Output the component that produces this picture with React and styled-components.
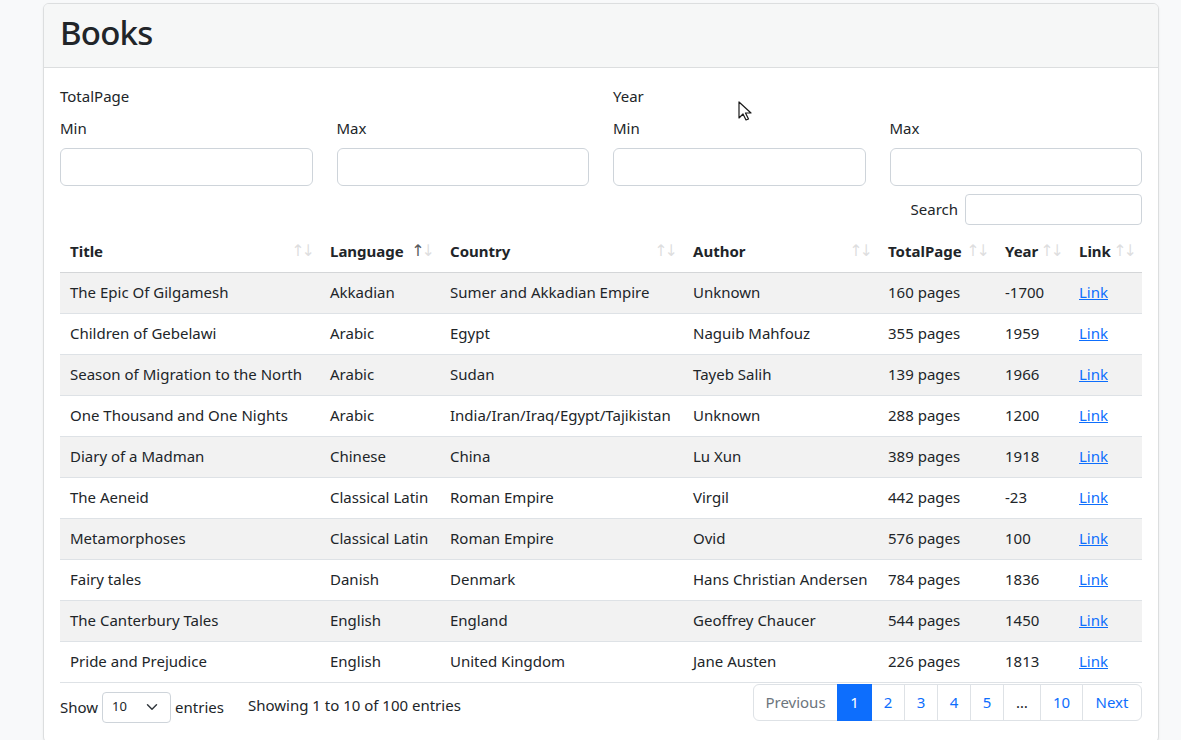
import React from 'react';
import styled, { createGlobalStyle } from 'styled-components';

const GlobalStyle = createGlobalStyle`
  html, body {
    margin: 0;
    padding: 0;
    background: #f8f9fa;
    color: #212529;
    font-family: "Noto Sans", "Open Sans", sans-serif;
    font-size: 15px;
    line-height: 1.5;
  }
  * { box-sizing: border-box; }
`;

const Page = styled.div`
  padding: 3px 22px 0 43px;
  position: relative;
`;

const Card = styled.div`
  border: 1px solid #dcdedf;
  border-radius: 6px;
  background: #fff;
  box-shadow: 0 1px 3px rgba(0, 0, 0, 0.05);
  overflow: hidden;
  min-height: 740px;
`;

const CardHeader = styled.div`
  background: #f6f7f7;
  border-bottom: 1px solid #dcdedf;
  padding: 3px 16px 0;
  height: 64px;
`;

const Title = styled.h1`
  margin: 0;
  font-size: 33px;
  font-weight: 500;
  letter-spacing: -0.8px;
  line-height: 52px;
  color: #212529;
`;

const CardBody = styled.div`
  padding: 17px 16px 16px;
`;

const FilterRow = styled.div`
  display: grid;
  grid-template-columns: repeat(2, 1fr);
  column-gap: 24px;
`;

const FilterGroup = styled.div`
  display: flex;
  flex-direction: column;
`;

const GroupLabel = styled.div`
  height: 32px;
  line-height: 22px;
`;

const MinMax = styled.div`
  display: grid;
  grid-template-columns: 1fr 1fr;
  column-gap: 24px;
`;

const Field = styled.label`
  display: flex;
  flex-direction: column;
  gap: 9px;
`;

const FieldLabel = styled.span`
  line-height: 22px;
`;

const Input = styled.input`
  height: 38px;
  width: 100%;
  border: 1px solid #ced4da;
  border-radius: 6px;
  font: inherit;
  padding: 6px 12px;
  background: #fff;
`;

const SearchRow = styled.div`
  display: flex;
  justify-content: flex-end;
  align-items: center;
  gap: 7px;
  margin-top: 8px;
`;

const SmallInput = styled.input`
  width: 177px;
  height: 31px;
  border: 1px solid #ced4da;
  border-radius: 4px;
  font: inherit;
`;

const Table = styled.table`
  width: 100%;
  border-collapse: collapse;
  table-layout: fixed;
  margin-top: 6px;
`;

const Th = styled.th`
  position: relative;
  text-align: left;
  font-weight: 700;
  padding: 8px 26px 8px 10px;
  height: 41px;
  border-bottom: 1px solid #d4d6d8;
  white-space: nowrap;
`;

const SortIcons = styled.span`
  position: absolute;
  right: 8px;
  top: 50%;
  transform: translateY(-50%);
  font-weight: 400;
  font-size: 16px;
  letter-spacing: -3px;
  color: #212529;
  font-family: "DejaVu Sans", sans-serif;
`;

const Arrow = styled.span`
  opacity: ${(p) => (p.$active ? 0.75 : 0.15)};
`;

const Tr = styled.tr`
  background: ${(p) => (p.$striped ? '#f2f2f2' : '#fff')};
`;

const Td = styled.td`
  padding: 8px 10px;
  height: 41px;
  border-bottom: 1px solid #dee2e6;
  white-space: nowrap;
`;

const A = styled.a`
  color: #0d6efd;
  text-decoration: underline;
`;

const Footer = styled.div`
  display: flex;
  align-items: flex-start;
  margin-top: 1px;
`;

const Length = styled.div`
  display: flex;
  align-items: center;
  gap: 4px;
  margin-top: 8px;
`;

const SelectBox = styled.div`
  width: 69px;
  height: 31px;
  border: 1px solid #ced4da;
  border-radius: 4px;
  display: flex;
  align-items: center;
  justify-content: space-between;
  padding: 0 12px 0 9px;
  font-size: 13px;
`;

const Info = styled.div`
  margin-left: 24px;
  margin-top: 10px;
`;

const Pagination = styled.ul`
  display: flex;
  list-style: none;
  margin: 0 0 0 auto;
  padding: 0;
`;

const PageItem = styled.li`
  height: 37px;
  min-width: ${(p) => p.$w}px;
  display: flex;
  align-items: center;
  justify-content: center;
  border: 1px solid #dee2e6;
  margin-left: -1px;
  color: ${(p) => (p.$active ? '#fff' : p.$muted ? '#6c757d' : p.$plain ? '#212529' : '#0d6efd')};
  background: ${(p) => (p.$active ? '#0d6efd' : '#fff')};
  border-color: ${(p) => (p.$active ? '#0d6efd' : '#dee2e6')};
  position: relative;
  z-index: ${(p) => (p.$active ? 1 : 0)};
  &:first-child {
    border-radius: 6px 0 0 6px;
    margin-left: 0;
  }
  &:last-child {
    border-radius: 0 6px 6px 0;
  }
`;

const Cursor = styled.svg`
  position: absolute;
  left: 738px;
  top: 101px;
`;

const columns = [
  ['Title', 260],
  ['Language', 120],
  ['Country', 243],
  ['Author', 195],
  ['TotalPage', 117],
  ['Year', 74],
  ['Link', 73],
];

const books = [
  ['The Epic Of Gilgamesh', 'Akkadian', 'Sumer and Akkadian Empire', 'Unknown', 160, '-1700'],
  ['Children of Gebelawi', 'Arabic', 'Egypt', 'Naguib Mahfouz', 355, '1959'],
  ['Season of Migration to the North', 'Arabic', 'Sudan', 'Tayeb Salih', 139, '1966'],
  ['One Thousand and One Nights', 'Arabic', 'India/Iran/Iraq/Egypt/Tajikistan', 'Unknown', 288, '1200'],
  ['Diary of a Madman', 'Chinese', 'China', 'Lu Xun', 389, '1918'],
  ['The Aeneid', 'Classical Latin', 'Roman Empire', 'Virgil', 442, '-23'],
  ['Metamorphoses', 'Classical Latin', 'Roman Empire', 'Ovid', 576, '100'],
  ['Fairy tales', 'Danish', 'Denmark', 'Hans Christian Andersen', 784, '1836'],
  ['The Canterbury Tales', 'English', 'England', 'Geoffrey Chaucer', 544, '1450'],
  ['Pride and Prejudice', 'English', 'United Kingdom', 'Jane Austen', 226, '1813'],
];

const pages = [
  { label: 'Previous', w: 85, muted: true },
  { label: '1', w: 35, active: true },
  { label: '2', w: 34 },
  { label: '3', w: 34 },
  { label: '4', w: 34 },
  { label: '5', w: 34 },
  { label: '…', w: 38, plain: true },
  { label: '10', w: 43 },
  { label: 'Next', w: 60 },
];

const RangeFilter = ({ title }) => (
  <FilterGroup>
    <GroupLabel>{title}</GroupLabel>
    <MinMax>
      <Field>
        <FieldLabel>Min</FieldLabel>
        <Input />
      </Field>
      <Field>
        <FieldLabel>Max</FieldLabel>
        <Input />
      </Field>
    </MinMax>
  </FilterGroup>
);

const App = () => (
  <Page>
    <GlobalStyle />
    <Card>
      <CardHeader>
        <Title>Books</Title>
      </CardHeader>
      <CardBody>
        <FilterRow>
          <RangeFilter title="TotalPage" />
          <RangeFilter title="Year" />
        </FilterRow>
        <SearchRow>
          <span>Search</span>
          <SmallInput />
        </SearchRow>
        <Table>
          <colgroup>
            {columns.map(([name, w]) => (
              <col key={name} style={{ width: w }} />
            ))}
          </colgroup>
          <thead>
            <tr>
              {columns.map(([name]) => (
                <Th key={name}>
                  {name}
                  <SortIcons>
                    <Arrow $active={name === 'Language'}>↑</Arrow>
                    <Arrow>↓</Arrow>
                  </SortIcons>
                </Th>
              ))}
            </tr>
          </thead>
          <tbody>
            {books.map((b, i) => (
              <Tr key={b[0]} $striped={i % 2 === 0}>
                <Td>{b[0]}</Td>
                <Td>{b[1]}</Td>
                <Td>{b[2]}</Td>
                <Td>{b[3]}</Td>
                <Td>{b[4]} pages</Td>
                <Td>{b[5]}</Td>
                <Td>
                  <A href="#">Link</A>
                </Td>
              </Tr>
            ))}
          </tbody>
        </Table>
        <Footer>
          <Length>
            <span>Show</span>
            <SelectBox>
              <span>10</span>
              <svg width="12" height="12" viewBox="0 0 16 16" fill="none">
                <path d="M2 5l6 6 6-6" stroke="#343a40" strokeWidth="2" strokeLinecap="round" strokeLinejoin="round" />
              </svg>
            </SelectBox>
            <span>entries</span>
          </Length>
          <Info>Showing 1 to 10 of 100 entries</Info>
          <Pagination>
            {pages.map((p) => (
              <PageItem key={p.label} $w={p.w} $active={p.active} $muted={p.muted} $plain={p.plain}>
                {p.label}
              </PageItem>
            ))}
          </Pagination>
        </Footer>
      </CardBody>
    </Card>
    <Cursor width="14" height="21" viewBox="0 0 14 21">
      <path d="M1 1v16l4-4 3 6 2.5-1-3-6h5.5z" fill="#fff" stroke="#1a1a1a" strokeWidth="1.2" strokeLinejoin="round" />
    </Cursor>
  </Page>
);

export default App;
